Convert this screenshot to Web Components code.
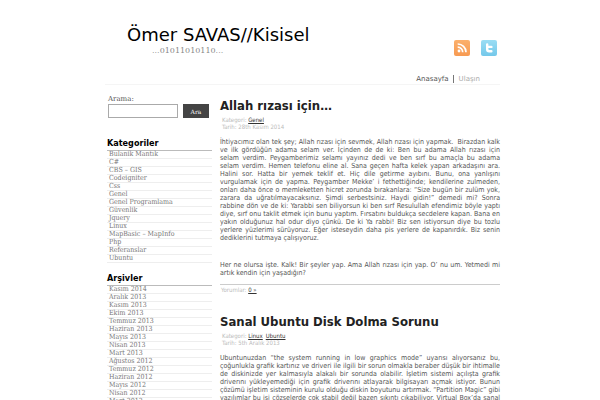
<!DOCTYPE html>
<html lang="tr">
<head>
<meta charset="utf-8">
<title>Ömer SAVAS//Kisisel</title>
<style>
  html, body {
    margin: 0;
    height: 100%;
    overflow: hidden;
  }
  body {
    background: #fff;
    font-family: "DejaVu Sans", Verdana, sans-serif;
    color: #555;
  }
  /* keeps the closing line of a justified paragraph at its own width */
  blog-post span {
    display: inline-block;
  }
</style>
</head>
<body>
<blog-page>
  <blog-header slot="header" name="Ömer SAVAS//Kisisel" tagline="...01011010110..."></blog-header>
  <search-box slot="sidebar"></search-box>
  <link-list slot="sidebar" heading="Kategoriler" items="Bulanik Mantık|C#|CBS – GIS|Codeigniter|Css|Genel|Genel Programlama|Güvenlik|Jquery|Linux|MapBasic – MapInfo|Php|Referanslar|Ubuntu"></link-list>
  <link-list slot="sidebar" heading="Arşivler" items="Kasım 2014|Aralık 2013|Kasım 2013|Ekim 2013|Temmuz 2013|Haziran 2013|Mayıs 2013|Nisan 2013|Mart 2013|Ağustos 2012|Temmuz 2012|Haziran 2012|Mayıs 2012|Nisan 2012|Mart 2012"></link-list>
  <blog-post heading="Allah rızası için…" categories="Genel" date="28th Kasım 2014" comments="0 »">
    <p>İhtiyacımız olan tek şey; Allah rızası için sevmek, Allah rızası için yapmak.&nbsp; Birazdan kalk<br>
    ve ilk gördüğün adama selam ver. İçinden de de ki: Ben bu adama Allah rızası için<br>
    selam verdim. Peygamberimiz selamı yayınız dedi ve ben sırf bu amaçla bu adama<br>
    selam verdim. Hemen telefonu eline al. Sana geçen hafta kelek yapan arkadaşını ara.<br>
    Halini sor. Hatta bir yemek teklif et. Hiç dile getirme ayıbını. Bunu, ona yanlışını<br>
    vurgulamak için de yapma. Peygamber Mekke’ i fethettiğinde; kendilerine zulmeden,<br>
    onları daha önce o memleketten hicret zorunda bırakanlara: “Size bugün bir zulüm yok,<br>
    zarara da uğratılmayacaksınız. Şimdi serbestsiniz. Haydi gidin!” demedi mi? Sonra<br>
    rabbine dön ve de ki: Yarabbi sen biliyorsun ki ben sırf Resulullah efendimiz böyle yaptı<br>
    diye, sırf onu taklit etmek için bunu yaptım. Fırsatını buldukça secdelere kapan. Bana en<br>
    yakın olduğunuz hal odur diyo çünkü. De ki Ya rabbi! Biz sen istiyorsun diye bu tozlu<br>
    yerlere yüzlerimi sürüyoruz. Eğer isteseydin daha pis yerlere de kapanırdık. Biz senin<br>
    <span>dediklerini tutmaya çalışıyoruz.</span></p>
    <p>Her ne olursa işte. Kalk! Bir şeyler yap. Ama Allah rızası için yap. O’ nu um. Yetmedi mi<br>
    <span>artık kendin için yaşadığın?</span></p>
  </blog-post>
  <blog-post heading="Sanal Ubuntu Disk Dolma Sorunu" categories="Linux|Ubuntu" date="5th Aralık 2013" comments="0 »">
    <p>Ubuntunuzdan “the system running in low graphics mode” uyarısı alıyorsanız bu,<br>
    çoğunlukla grafik kartınız ve driveri ile ilgili bir sorun olmakla beraber düşük bir ihtimalle<br>
    de diskinizde yer kalmasıyla alakalı bir sorunda olabilir. İşletim sistemi açılışta grafik<br>
    driverını yükleyemediği için grafik driverını atlayarak bilgisayarı açmak istiyor. Bunun<br>
    çözümü işletim sisteminin kurulu olduğu diskin boyutunu artırmak. “Partition Magic” gibi<br>
    yazılımlar bu işi çözselerde çok stabil değil bazen sıkıntı çıkabiliyor. Virtual Box’da sanal</p>
  </blog-post>
</blog-page>

<script>
function define(name, html, setup) {
  const template = document.createElement('template');
  template.innerHTML = html;

  customElements.define(name, class extends HTMLElement {
    constructor() {
      super();
      this.attachShadow({mode: 'open'});
      this.shadowRoot.appendChild(template.content.cloneNode(true));
    }
    connectedCallback() {
      if (setup) setup(this, this.shadowRoot);
    }
  });
}

function addLink(parent, text) {
  const link = document.createElement('a');
  link.href = '#';
  link.textContent = text;
  parent.appendChild(link);
}

define('blog-page', `
  <style>
    :host {
      display: block;
      max-width: 395px;
      margin: 0 auto;
      padding-left: 5px;
    }
    .columns {
      display: grid;
      grid-template-columns: minmax(0, 3fr) minmax(0, 8fr);
      column-gap: 8px;
      padding-left: 2px;
    }
    aside {
      padding-top: 10px;
    }
    main {
      padding-top: 12px;
    }
  </style>
  <slot name="header"></slot>
  <div class="columns">
    <aside><slot name="sidebar"></slot></aside>
    <main><slot></slot></main>
  </div>
`);

define('blog-header', `
  <style>
    :host {
      display: block;
      border-bottom: 1px solid #f5f5f5;
    }
    .top {
      display: flex;
      justify-content: space-between;
      padding: 24px 3px 0 22px;
    }
    h1 {
      margin: 0;
      font-size: 18px;
      font-weight: normal;
      line-height: 22px;
      color: #000;
    }
    .tagline {
      margin: 0;
      padding-left: 25px;
      font-family: "DejaVu Serif", serif;
      font-size: 8px;
      line-height: 10px;
      color: #888;
    }
    .social {
      display: flex;
      gap: 11px;
      padding-top: 16px;
    }
    svg {
      display: block;
    }
    nav {
      display: flex;
      justify-content: flex-end;
      align-items: center;
      padding: 18px 20px 0 0;
      font-size: 7px;
      line-height: 10px;
    }
    nav a {
      color: #aaa;
      text-decoration: none;
    }
    nav a.current {
      color: #555;
    }
    nav span {
      height: 8px;
      margin: 0 5px 0 4px;
      border-left: 1px solid #777;
    }
  </style>
  <div class="top">
    <div>
      <h1></h1>
      <p class="tagline"></p>
    </div>
    <div class="social">
      <a href="#" aria-label="RSS">
        <svg width="16" height="16" viewBox="0 0 16 16">
          <defs>
            <linearGradient id="rss" x2="0" y2="1">
              <stop stop-color="#fbb06c"/>
              <stop offset="1" stop-color="#f79a52"/>
            </linearGradient>
          </defs>
          <rect width="16" height="16" rx="2" fill="url(#rss)"/>
          <circle cx="5" cy="11" r="1.4" fill="#fff"/>
          <path d="M3.7 7.2a5 5 0 0 1 5 5M3.7 4a8.2 8.2 0 0 1 8.3 8.2" fill="none" stroke="#fff" stroke-width="1.7"/>
        </svg>
      </a>
      <a href="#" aria-label="Twitter">
        <svg width="16" height="16" viewBox="0 0 16 16">
          <defs>
            <linearGradient id="bird" x2="0" y2="1">
              <stop stop-color="#9addf4"/>
              <stop offset="1" stop-color="#74c8ea"/>
            </linearGradient>
          </defs>
          <rect width="16" height="16" rx="2" fill="url(#bird)"/>
          <path d="M6.2 4.4v4.8q0 2 2 2h2.200M6.200 6.900h4.200" fill="none" stroke="#fff" stroke-width="2.400" stroke-linecap="round"/>
        </svg>
      </a>
    </div>
  </div>
  <nav><a class="current" href="#">Anasayfa</a><span></span><a href="#">Ulaşın</a></nav>
`, (host, root) => {
  root.querySelector('h1').textContent = host.getAttribute('name');
  root.querySelector('.tagline').textContent = host.getAttribute('tagline');
});

define('search-box', `
  <style>
    :host {
      display: block;
      padding: 0 3px 19px 1px;
      font-family: "DejaVu Serif", serif;
    }
    label {
      display: block;
      font-size: 7px;
      line-height: 9px;
    }
    form {
      display: flex;
      gap: 5px;
    }
    input {
      flex: 1;
      width: 0;
      height: 14px;
      box-sizing: border-box;
      border: 1px solid #aaa;
      padding: 0 2px;
      font-size: 7px;
    }
    button {
      width: 26px;
      border: 0;
      padding: 0;
      background: #444;
      color: #fff;
      font-family: inherit;
      font-size: 6px;
    }
  </style>
  <label for="s">Arama:</label>
  <form>
    <input id="s" type="text">
    <button type="button">Ara</button>
  </form>
`);

define('link-list', `
  <style>
    :host {
      display: block;
      padding-bottom: 9px;
    }
    h2 {
      margin: 0;
      border-bottom: 1px solid #bbb;
      padding-bottom: 1px;
      font-family: "DejaVu Sans Condensed", "DejaVu Sans", sans-serif;
      font-stretch: condensed;
      font-size: 9px;
      line-height: 12px;
      color: #000;
    }
    ul {
      margin: 0;
      padding: 0;
      list-style: none;
    }
    li {
      border-bottom: 1px solid #eee;
      padding-left: 2px;
      font-family: "DejaVu Serif Condensed", "DejaVu Serif", serif;
      font-stretch: condensed;
      font-size: 7px;
      line-height: 7px;
    }
    a {
      color: #777;
      text-decoration: none;
    }
  </style>
  <h2></h2>
  <ul></ul>
`, (host, root) => {
  root.querySelector('h2').textContent = host.getAttribute('heading');
  host.getAttribute('items').split('|').forEach(item => {
    const li = document.createElement('li');
    addLink(li, item);
    root.querySelector('ul').appendChild(li);
  });
});

define('blog-post', `
  <style>
    :host {
      display: block;
      padding-bottom: 18px;
    }
    h2 {
      margin: 0;
      font-family: "DejaVu Sans Condensed", "DejaVu Sans", sans-serif;
      font-stretch: condensed;
      font-size: 13px;
      line-height: 18px;
      color: #222;
    }
    .meta, footer {
      font-family: "DejaVu Sans Condensed", "DejaVu Sans", sans-serif;
      font-stretch: condensed;
      font-size: 6px;
      line-height: 7px;
      color: #bbb;
    }
    .meta {
      padding: 1px 0 0 2px;
    }
    a {
      color: #333;
      margin-right: 3px;
    }
    .body {
      display: flex;
      flex-direction: column;
      gap: 19px;
      padding: 8px 0 7px;
    }
    ::slotted(p) {
      margin: 0;
      font-family: "DejaVu Sans Condensed", "DejaVu Sans", sans-serif;
      font-stretch: condensed;
      font-size: 7px;
      line-height: 8px;
      text-align: justify;
      text-align-last: justify;
    }
    footer {
      border-top: 1px solid #ccc;
      padding: 1px 1px 2px;
    }
  </style>
  <article>
    <h2></h2>
    <div class="meta">
      <div>Kategori: <span class="categories"></span></div>
      <div class="date"></div>
    </div>
    <div class="body"><slot></slot></div>
    <footer>Yorumlar: <span class="comments"></span></footer>
  </article>
`, (host, root) => {
  root.querySelector('h2').textContent = host.getAttribute('heading');
  root.querySelector('.date').textContent = 'Tarih: ' + host.getAttribute('date');
  host.getAttribute('categories').split('|').forEach(category => {
    addLink(root.querySelector('.categories'), category);
  });
  addLink(root.querySelector('.comments'), host.getAttribute('comments'));
});
</script>
</body>
</html>
